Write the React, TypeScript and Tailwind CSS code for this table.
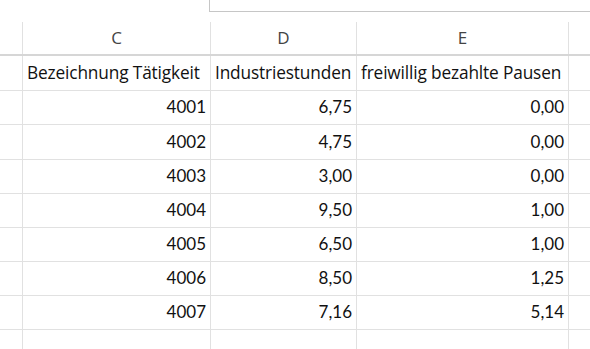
import React from "react";

const rows: [string, string, string][] = [
  ["4001", "6,75", "0,00"],
  ["4002", "4,75", "0,00"],
  ["4003", "3,00", "0,00"],
  ["4004", "9,50", "1,00"],
  ["4005", "6,50", "1,00"],
  ["4006", "8,50", "1,25"],
  ["4007", "7,16", "5,14"],
];

const heights = ["h-[34px]", "h-[35px]", "h-[34px]", "h-[34px]", "h-[34px]", "h-[34px]", "h-[34px]"];

const cols = "grid grid-cols-[23px_188px_146px_212px_1fr]";
const cell = "border-r border-b border-[#e1e1e1]";
const num = "flex items-center justify-end pr-[4px] pb-[1px] text-[17px] text-[#111] font-['Lato','Liberation_Sans',sans-serif]";

export default function App() {
  return (
    <div className="w-[590px] h-[349px] overflow-hidden bg-white relative">
      <div className="h-[22px] flex">
        <div className="w-[209px]" />
        <div className="flex-1 h-[12px] border-l border-b border-[#c6c6c6] bg-white" />
      </div>
      <div className={`${cols} h-[32px] text-[17px] text-[#444] font-['Open_Sans','Liberation_Sans',sans-serif]`}>
        <div className="border-r border-[#e1e1e1]" />
        <div className="border-r border-[#e1e1e1] flex items-center justify-center">C</div>
        <div className="border-r border-[#e1e1e1] flex items-center justify-center">D</div>
        <div className="border-r border-[#e1e1e1] flex items-center justify-center">E</div>
        <div />
      </div>
      <div className="h-[2px] bg-[#d6d6d6]" />
      <div className={`${cols} h-[35px] text-[17.3px] text-[#111] font-['Open_Sans','Liberation_Sans',sans-serif] tracking-[-0.15px]`}>
        <div className={cell} />
        <div className={`${cell} flex items-center pl-[4px] whitespace-nowrap overflow-hidden`}>Bezeichnung Tätigkeit</div>
        <div className={`${cell} flex items-center pl-[4px] whitespace-nowrap overflow-hidden`}>Industriestunden</div>
        <div className={`${cell} flex items-center pl-[4px] whitespace-nowrap overflow-hidden`}>freiwillig bezahlte Pausen</div>
        <div className="border-b border-[#e1e1e1]" />
      </div>
      {rows.map((r, i) => (
        <div key={r[0]} className={`${cols} ${heights[i]}`}>
          <div className={cell} />
          <div className={`${cell} ${num}`}>{r[0]}</div>
          <div className={`${cell} ${num}`}>{r[1]}</div>
          <div className={`${cell} ${num}`}>{r[2]}</div>
          <div className="border-b border-[#e1e1e1]" />
        </div>
      ))}
      <div className={`${cols} h-[30px]`}>
        <div className="border-r border-[#e1e1e1]" />
        <div className="border-r border-[#e1e1e1]" />
        <div className="border-r border-[#e1e1e1]" />
        <div className="border-r border-[#e1e1e1]" />
        <div />
      </div>
    </div>
  );
}
